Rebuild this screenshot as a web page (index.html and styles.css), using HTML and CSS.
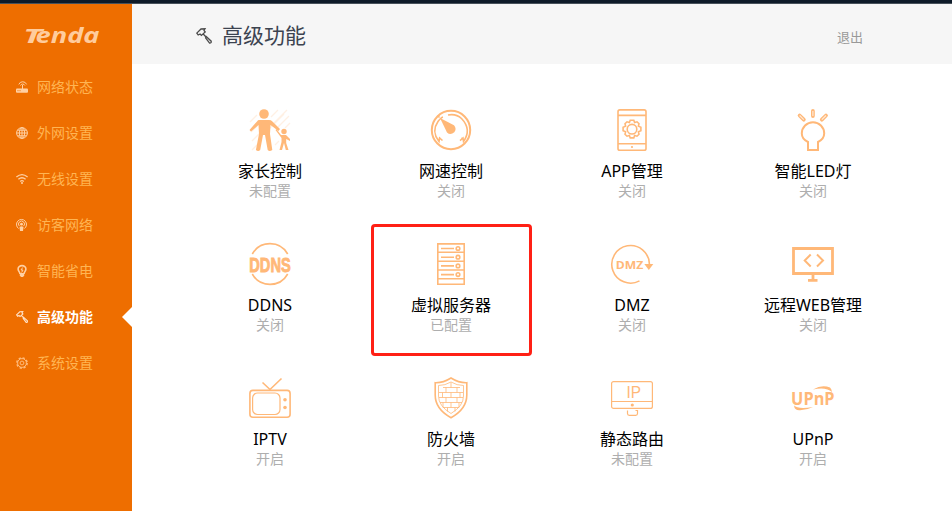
FILE: index.html
```html
<!DOCTYPE html>
<html lang="zh-CN">
<head>
<meta charset="utf-8">
<title>高级功能</title>
<link rel="stylesheet" href="styles.css">
</head>
<body>
<div class="topline"></div>
<div class="app">
  <aside class="sidebar">
    <svg class="logo" viewBox="0 0 76 20"><text x="-2" y="17" textLength="19" lengthAdjust="spacingAndGlyphs" class="logo-cap">T</text><text x="10.5" y="17" textLength="64" lengthAdjust="spacingAndGlyphs" class="logo-text">enda</text></svg>
    <nav class="nav">
      <a class="nav-item"><svg class="nav-icon" viewBox="0 0 12 12"><rect class="solid" x="0" y="7.5" width="12" height="4.3" rx="1"/><path d="M6.5 8V4M4.5 4.5a2.4 2.4 0 0 1 4.4 0M2.8 3.4a4.2 4.2 0 0 1 7.8 0"/><path class="cut" d="M1.5 9.7h1M3.5 9.7h1"/></svg><span>网络状态</span></a>
      <a class="nav-item"><svg class="nav-icon" viewBox="0 0 12 12"><circle cx="6" cy="6" r="5.4"/><ellipse cx="6" cy="6" rx="2.6" ry="5.4"/><path d="M6 .6v10.8M.6 6h10.8M1.4 3.2h9.2M1.4 8.8h9.2"/></svg><span>外网设置</span></a>
      <a class="nav-item"><svg class="nav-icon wifi" viewBox="0 0 12 12"><path d="M.4 4Q6-.7 11.6 4M2.4 6.3Q6 3.2 9.6 6.3M4.2 8.4Q6 6.9 7.8 8.4"/><circle class="solid" cx="6" cy="10.1" r="1"/></svg><span>无线设置</span></a>
      <a class="nav-item"><svg class="nav-icon" viewBox="0 0 12 12"><path d="M2.7 9.6a5 5 0 1 1 5.6 0M3.3 7.1a3 3 0 1 1 4.4 0"/><circle class="solid" cx="5.5" cy="5.2" r="1.4"/><path class="solid" d="M3.5 8Q5.5 6.5 7.5 8L7 12H4z"/></svg><span>访客网络</span></a>
      <a class="nav-item"><svg class="nav-icon" viewBox="0 0 12 12"><path class="bulb" d="M4 9C4 7 2.1 6.2 2.1 4a3.9 3.4 0 0 1 7.8 0C9.9 6.2 8 7 8 9"/><path class="solid" d="M3.8 8h4.4v2.5L7 12H5l-1.2-1.5z"/><path d="M6.7 2.5 5 5h2L5.6 7.5"/></svg><span>智能省电</span></a>
      <a class="nav-item active"><svg class="nav-icon" viewBox="0 0 16 16"><path d="M.8 5.1 5 1l4-.2L8 2.500 9.200 4 5.400 7.400 4.100 6 2.200 7zM7 5.800l3.200 3.400M10.200 8.500l5 4.700q.4 2-1.600 2l-4-5.300z"/></svg><span>高级功能</span></a>
      <a class="nav-item"><svg class="nav-icon gear" viewBox="0 0 12 12"><circle class="teeth" cx="6" cy="6" r="5.100"/><circle cx="6" cy="6" r="4.400"/><circle cx="6" cy="6" r="1.900"/></svg><span>系统设置</span></a>
    </nav>
  </aside>
  <main class="main">
    <header class="header">
      <svg class="head-icon" viewBox="0 0 16 16"><path d="M.8 5.1 5 1l4-.2L8 2.5 9.2 4 5.4 7.4 4.1 6 2.2 7zM7 5.8l3.2 3.4M10.2 8.5l5 4.7q.4 2-1.6 2l-4-5.3z"/></svg>
      <h1>高级功能</h1>
      <a class="logout">退出</a>
    </header>
    <section class="grid">
      <div class="item"><svg class="icon" viewBox="0 0 42 42"><path class="hatch" d="M1 13 8 6M2 23l7-7M3 32l9-9M3 41 13 31M18 22l17-17M22 8l7-7M22 17 38 1M29 18l11-11M36 19l5-5M26 36l4-4"/><circle class="fill" cx="15" cy="5" r="4.8"/><path class="fill" d="M10 11h10q2 0 3.4 1.4L31 20l-1.5 2-8-6-.5 9 2.3 16q-2.8 2-4.6 0L16 26h-2l-2.8 15q-2 2-4.3 0L10 25l-.5-9L2 22.6.5 21 8 12.4Q9 11 10 11z"/><circle class="fill" cx="35" cy="22.5" r="2.7"/><path class="fill" d="M32 26h5l4 4v2l-3.8-2v4l2.3 7h-2.7L35 34l-2 7h-2.5l2-8v-4l-6-8 1-1z"/></svg><h2>家长控制</h2><p>未配置</p></div>
      <div class="item"><svg class="icon" viewBox="0 0 42 42"><circle class="w2" cx="21" cy="21" r="19.2"/><path d="M12.5 31.5 9.6 29 9 32.5q-8-10-1-20Q11 8.5 13 8M18 6q8-1.6 13.5 3.5 10.5 11 2 23l-.5-3.5-3 2.6M9.5 29l1 .6M32.5 29l-1 .6"/><path class="fill" d="m10 9 14 7.2q3 3.5.3 7-3.8 3.5-7.3.3z"/><path d="m7.5 6.5 2 2"/></svg><h2>网速控制</h2><p>关闭</p></div>
      <div class="item"><svg class="icon" viewBox="0 0 42 42"><rect x="7" y=".9" width="28" height="40.4" rx="1.8"/><path d="M7 6.4h28M7 34.7h28"/><path d="m19.2 11.2 3.6 0 .8 2.3 2.4-.7 2 2-.6 2.3 2.5 1.2v3.4l-2.5 1 .6 2.5-2 2-2.4-.8-.8 2.5h-3.6l-.8-2.5-2.4.8-2-2 .6-2.5-2.5-1v-3.4l2.5-1.2-.6-2.3 2-2 2.4.7z"/><circle cx="21" cy="20.2" r="4.8"/><circle class="fill" cx="21" cy="38" r="1.1"/></svg><h2>APP管理</h2><p>关闭</p></div>
      <div class="item"><svg class="icon" viewBox="0 0 42 42"><path class="w2" d="M16 41V33Q9.8 30 9.8 24.5a11.2 11.2 0 0 1 22.4 0Q32.2 30 26 33v8z"/><path class="ray" d="M20.9 2v5M7.600 6.500l4.200 4.200M34 6.500l-4.200 4.200"/><path class="ray-core" d="M20.900 2v5M7.600 6.500l4.200 4.200M34 6.500l-4.200 4.200"/></svg><h2>智能LED灯</h2><p>关闭</p></div>
      <div class="item"><svg class="icon" viewBox="0 0 42 42"><path d="M3.300 11a20.300 20.300 0 0 1 35.400 0M3.300 31a20.300 20.300 0 0 0 35.400 0"/><text class="t-ddns" x=".3" y="28.600" textLength="41.500" lengthAdjust="spacingAndGlyphs">DDNS</text></svg><h2>DDNS</h2><p>关闭</p></div>
      <div class="item marked"><svg class="icon" viewBox="0 0 42 42"><path d="M7.800.900h26.400v40.300H7.800zM7.800 9.300h26.400M7.800 18.200h26.400M7.800 27h26.400M7.800 35.700h26.400M11 5.500h13M11 14.200h13M11 22.900h13M11 31.600h13"/><circle cx="28" cy="5.500" r="1.800"/><circle cx="28" cy="14.200" r="1.800"/><circle cx="28" cy="22.900" r="1.800"/><circle cx="28" cy="31.600" r="1.800"/></svg><h2>虚拟服务器</h2><p>已配置</p></div>
      <div class="item"><svg class="icon" viewBox="0 0 42 42"><path d="M28.500 37.900A18.800 18.800 0 1 1 38.400 21"/><path class="fill" d="M33.300 21h9l-4.500 6z"/><text class="t-dmz" x="4.700" y="25.600" textLength="27.500" lengthAdjust="spacingAndGlyphs">DMZ</text></svg><h2>DMZ</h2><p>关闭</p></div>
      <div class="item"><svg class="icon" viewBox="0 0 42 42"><path class="w3" d="M1.500 5.500h39v25h-39zM21 31v6M16 37.400h9.500"/><path class="w2" d="m18.700 11.500-6 6 6 6M25 11.500l6 6-6 6"/></svg><h2>远程WEB管理</h2><p>关闭</p></div>
      <div class="item"><svg class="icon" viewBox="0 0 42 42"><rect x=".9" y="13.400" width="40.200" height="26.800" rx="3"/><rect class="w1" x="3.600" y="16" width="27.400" height="21.500" rx="5"/><path d="M13.500 5.500 21 12.500 32.500 1.500"/><circle class="fill" cx="36" cy="22.700" r="1.800"/><circle class="fill" cx="36" cy="30.500" r="1.800"/></svg><h2>IPTV</h2><p>开启</p></div>
      <div class="item"><svg class="icon" viewBox="0 0 42 42"><path d="M21 1q8 5 15.800 4.700V18q0 14-15.800 22.700Q5.200 32 5.200 18V5.700Q13 6 21 1z"/><path class="brick" d="M21 5q6 3.500 12.500 3.500V19q0 10-12.500 17.500Q8.500 29 8.500 19V8.500Q15 8.500 21 5zM13 10.500h17M9 15.500h24M9 20.500h24M10 25.500h22M13 30.500h16M21 5.500v5M16 10.500v5M27 10.500v5M12.500 15.500v5M21 15.500v5M30 15.500v5M16 20.500v5M27 20.500v5M13 25.500v5M21 25.500v5M29 25.500v5M17.500 30.500v4M25 30.500v4"/></svg><h2>防火墙</h2><p>开启</p></div>
      <div class="item"><svg class="icon" viewBox="0 0 42 42"><rect class="w1" x=".6" y="4.600" width="40.800" height="26.800" rx="2"/><path class="w1" d="M1 24.500h40M16.500 33.500v3q0 1.800 1.800 1.800h6.400q1.800 0 1.800-1.800v-3h-2"/><circle class="fill" cx="21.300" cy="28" r="1.600"/><text class="t-ip" x="15.500" y="20.600" textLength="14.500" lengthAdjust="spacingAndGlyphs">IP</text></svg><h2>静态路由</h2><p>未配置</p></div>
      <div class="item"><svg class="icon" viewBox="0 0 42 42"><text class="t-upnp" x="-.9" y="27.500" textLength="43.500" lengthAdjust="spacingAndGlyphs">UPnP</text><path class="fill" d="M21 12.500Q30 7 38 10.500q1.500 1 2 4.500Q34 9.500 21 12.500zM2 28.500q4 4 19 1.500-7 3.500-13.500 3.300Q2.500 33.500 2 28.500z"/></svg><h2>UPnP</h2><p>开启</p></div>
    </section>
  </main>
</div>
</body>
</html>
```
FILE: styles.css
```css
* { box-sizing: border-box; }
body { margin: 0; width: 952px; height: 511px; overflow: hidden; background: #fff; font-family: "Noto Sans", "Noto Sans CJK SC", sans-serif; }
h1, h2, p { margin: 0; font-weight: 400; }
svg { overflow: visible; fill: none; display: block; }
.topline { height: 4px; background: #0e1b29; border-bottom: 1px solid #47515a; }
.app { display: flex; height: 507px; }
.sidebar { width: 132px; background: #ee6e00; flex: none; }
.logo { width: 76px; height: 20px; margin: 22px 0 0 25px; fill: #ffcc9d; }
.logo-text { font: italic 700 21px "Open Sans", sans-serif; }
.logo-cap { font: italic 700 19px "Open Sans", sans-serif; }
.nav { margin-top: 17px; }
.nav-item { display: flex; align-items: center; height: 46px; padding-left: 16px; gap: 9px; font: 14px/20px "Noto Sans CJK SC", sans-serif; color: #ffb553; position: relative; }
.nav-icon { width: 12px; height: 12px; stroke: #ffd0a3; stroke-width: 1; flex: none; margin-top: 2px; }
.nav-icon.wifi { stroke-width: 1.3; }
.nav-icon.gear { stroke: #ffba79; }
.nav-icon .solid { fill: #ffd0a3; stroke: none; }
.nav-icon .cut { stroke: #ee6e00; }
.nav-icon .bulb { stroke-width: 1.6; }
.nav-icon .teeth { stroke-width: 1.6; stroke-dasharray: 2.2 1.805; }
.active { color: #fff; font-weight: 700; }
.active .nav-icon { stroke-width: 1.5; stroke: #ffe2c8; }
.active::after { content: ""; position: absolute; right: 0; top: 14px; border: 10px solid transparent; border-left: 0; border-right-color: #fff; }
.main { flex: 1; }
.header { height: 60px; background: #f6f6f6; display: flex; align-items: center; padding: 0 89px 0 64px; }
.head-icon { width: 16px; height: 16px; stroke: #4b4b4b; stroke-width: 1.3; margin: 3px 10px 0 0; }
.header h1 { font: 21px/30px "Noto Sans CJK SC", sans-serif; color: #3c4350; margin-top: -1px; }
.logout { margin: 5px 0 0 auto; font: 13px/20px "Noto Sans CJK SC", sans-serif; color: #999; }
.grid { display: grid; grid-template-columns: repeat(4, 161px); grid-auto-rows: 132px; gap: 2px 20px; padding: 26px 0 0 58px; }
.item { border: 3px solid transparent; border-radius: 4px; padding: 16px 0 0; padding-right: 1px; text-align: center; }
.item.marked { border-color: #ff2015; }
.icon { width: 42px; height: 42px; margin: 0 auto; stroke: #ffb878; stroke-width: 1.6; }
.icon .fill { fill: #ffb878; stroke: none; }
.icon .hatch { stroke: #fff0e3; stroke-width: 1.3; }
.icon .w1 { stroke-width: 1.2; }
.icon .w2 { stroke-width: 2; }
.icon .w3 { stroke-width: 2.8; }
.icon .brick { stroke-width: 1; opacity: .8; }
.icon .ray { stroke-width: 3.8; stroke-linecap: round; }
.icon .ray-core { stroke: #ffead8; stroke-width: 1.2; }
.icon text { fill: #ffb878; stroke: none; }
.icon .t-ddns { font: 700 21px "Liberation Sans", sans-serif; stroke: #ffb878; stroke-width: .9; }
.t-dmz { font: 700 10.5px "Open Sans", sans-serif; }
.t-ip { font: 16.5px "Liberation Sans", sans-serif; }
.t-upnp { font: 700 17px "Open Sans", sans-serif; }
.item h2 { font-size: 16px; line-height: 20px; margin-top: 10px; color: #000; white-space: nowrap; }
.item p { font-size: 14px; line-height: 20px; color: #aeaeae; }
```
